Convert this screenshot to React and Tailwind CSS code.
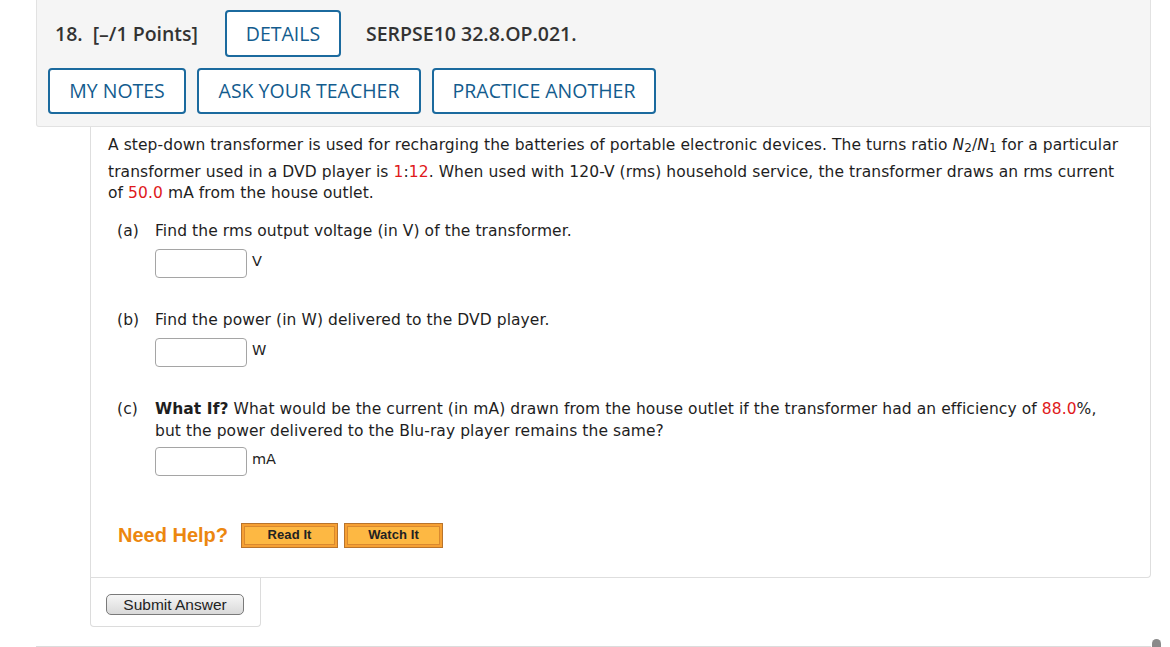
import React from 'react';

const blueBtn =
    'h-[46px] border-2 border-[#1b6a9e] rounded-[4px] bg-white text-[#135c8e] text-[19.5px] [font-family:Open_Sans,sans-serif] flex items-center justify-center';

const Red = ({ children }) => <span className="text-[#e0191b]">{children}</span>;

const HelpButton = ({ label, width }) => (
    <div className={`h-[25px] ${width} border border-[#b9742c] bg-[#f6a033] p-[2px]`}>
        <div className="h-full w-full border border-[#d9892f] bg-[#fdb843] flex items-center justify-center text-[13px] font-bold text-[#222] [font-family:Liberation_Sans,Arial,sans-serif]">
            {label}
        </div>
    </div>
);

const AnswerBox = ({ unit }) => (
    <div className="flex items-start h-[29px] ml-[64px]">
        <div className="w-[92px] h-[29px] border border-[#a5a5a5] rounded-[4px] bg-white" />
        <span className="ml-[5px] mt-[2px] text-[14.5px] leading-[20px] tracking-normal text-[#222]">{unit}</span>
    </div>
);

const Part = ({ tag, leading = 'leading-[21px]', children }) => (
    <div className={`flex ml-[26px] ${leading}`}>
        <span className="w-[38px] shrink-0">{tag}</span>
        <div>{children}</div>
    </div>
);

export default function App() {
    return (
        <div className="w-[1170px] h-[647px] bg-white relative overflow-hidden">
            {/* question header */}
            <div className="ml-[36px] w-[1115px] h-[127px] bg-[#f5f5f5] border border-t-0 border-[#e2e2e2] rounded-bl-[3px] pt-[10px] pl-[11px] [font-family:Open_Sans,sans-serif]">
                <div className="flex items-center h-[47px]">
                    <span className="ml-[7px] text-[19.5px] font-semibold text-[#333]">18.</span>
                    <span className="ml-[10px] text-[19.5px] font-semibold text-[#333]">[–/1 Points]</span>
                    <button className={`${blueBtn} h-[47px] ml-[27px] w-[116px]`}>DETAILS</button>
                    <span className="ml-[25px] text-[19.5px] font-semibold text-[#333]">SERPSE10 32.8.OP.021.</span>
                </div>
                <div className="flex gap-[11px] mt-[11px]">
                    <button className={`${blueBtn} w-[138px]`}>MY NOTES</button>
                    <button className={`${blueBtn} w-[224px]`}>ASK YOUR TEACHER</button>
                    <button className={`${blueBtn} w-[224px]`}>PRACTICE ANOTHER</button>
                </div>
            </div>

            {/* question body */}
            <div className="ml-[90px] w-[1061px] h-[451px] border border-t-0 border-[#dedede] rounded-br-[4px] pt-[8px] text-[15.5px] tracking-[0.08px] text-[#1e1e1e] [font-family:DejaVu_Sans,Verdana,sans-serif]">
                <div className="pl-[17px]">
                    <div className="h-[27px] leading-[21px] whitespace-nowrap">
                        A step-down transformer is used for recharging the batteries of portable electronic devices. The turns ratio{' '}
                        <i>N</i>
                        <sub className="text-[12px] relative top-[2px]">2</sub>/<i>N</i>
                        <sub className="text-[12px] relative top-[2px]">1</sub> for a particular
                    </div>
                    <div className="leading-[21px] whitespace-nowrap">
                        transformer used in a DVD player is <Red>1</Red>:<Red>12</Red>. When used with 120-V (rms) household service, the transformer draws an rms current
                    </div>
                    <div className="leading-[21px] whitespace-nowrap">
                        of <Red>50.0</Red> mA from the house outlet.
                    </div>
                </div>

                <div className="mt-[17px]">
                    <Part tag="(a)">Find the rms output voltage (in V) of the transformer.</Part>
                    <div className="mt-[7px]">
                        <AnswerBox unit="V" />
                    </div>
                </div>

                <div className="mt-[32px]">
                    <Part tag="(b)">Find the power (in W) delivered to the DVD player.</Part>
                    <div className="mt-[7px]">
                        <AnswerBox unit="W" />
                    </div>
                </div>

                <div className="mt-[31px]">
                    <Part tag="(c)" leading="leading-[22px]">
                        <div className="whitespace-nowrap">
                            <b>What If?</b> What would be the current (in mA) drawn from the house outlet if the transformer had an efficiency of{' '}
                            <Red>88.0</Red>%,
                        </div>
                        <div className="whitespace-nowrap">but the power delivered to the Blu-ray player remains the same?</div>
                    </Part>
                    <div className="mt-[5px]">
                        <AnswerBox unit="mA" />
                    </div>
                </div>

                <div className="flex items-center mt-[44px] ml-[27px] gap-[6px]">
                    <span className="mr-[7px] text-[20px] font-bold tracking-normal text-[#ec870f] [font-family:Liberation_Sans,Arial,sans-serif]">Need Help?</span>
                    <HelpButton label="Read It" width="w-[97px]" />
                    <HelpButton label="Watch It" width="w-[99px]" />
                </div>
            </div>

            {/* submit */}
            <div className="ml-[90px] w-[171px] h-[49px] border border-t-0 border-[#dcdcdc] rounded-b-[4px] pt-[14px] pl-[15px]">
                <button className="w-[138px] h-[21px] border border-[#7a7a7a] rounded-[5px] bg-gradient-to-b from-[#f6f6f6] to-[#d9d9d9] text-[15.5px] leading-[19px] text-[#222] [font-family:Liberation_Sans,Arial,sans-serif]">
                    Submit Answer
                </button>
            </div>

            <div className="ml-[36px] mt-[19px] w-[1115px] border-t border-[#dcdcdc]" />
            <div className="absolute left-[1152px] top-[639px] w-[9px] h-[12px] rounded-t-full bg-[#8a8a8a]" />
        </div>
    );
}
